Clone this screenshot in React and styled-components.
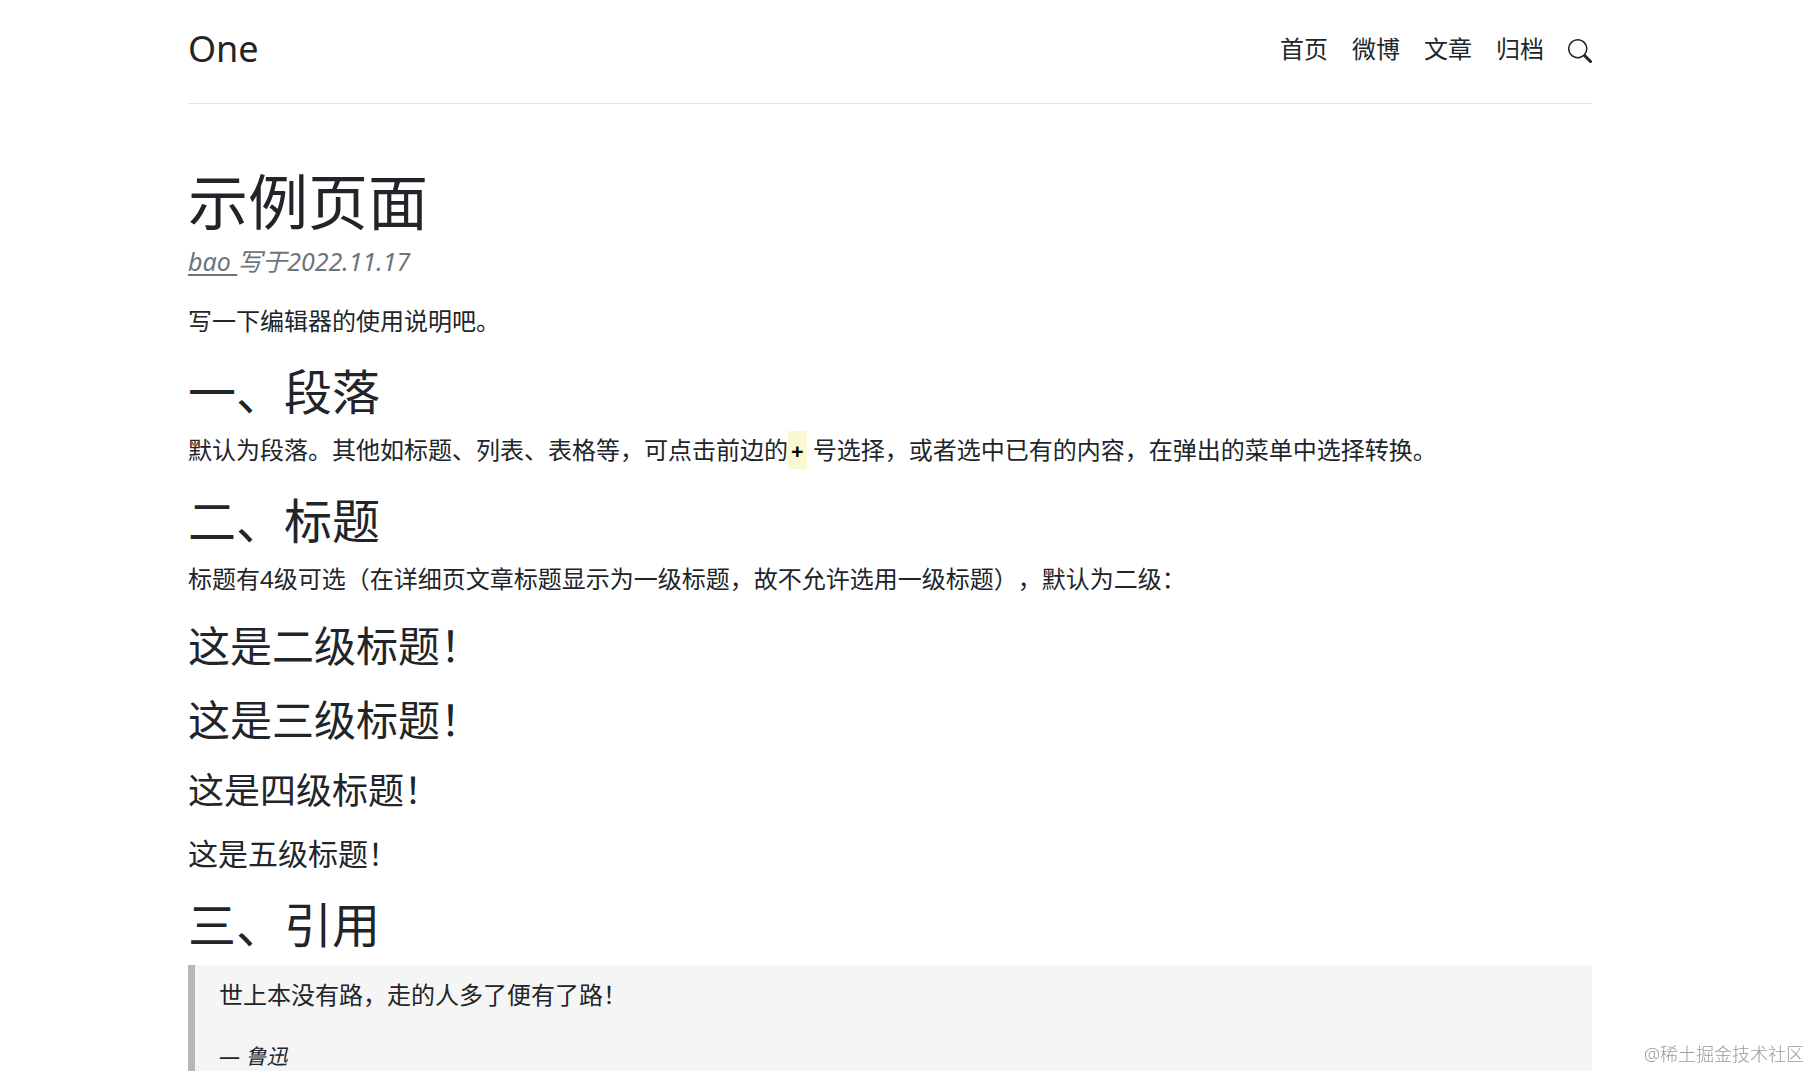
import React from "react";
import styled, { createGlobalStyle, css } from "styled-components";
import { BsSearch } from "react-icons/bs";

const GlobalStyle = createGlobalStyle`
  * {
    box-sizing: border-box;
  }
  body {
    margin: 0;
    background: #fff;
    color: #212529;
    font-family: "Noto Sans", "Noto Sans CJK SC", sans-serif;
    font-size: 24px;
    line-height: 36px;
    text-spacing-trim: space-all;
  }
`;

const navLinks = ["首页", "微博", "文章", "归档"];

const subHeadings = [
  { level: 3, text: "这是二级标题！" },
  { level: 3, text: "这是三级标题！" },
  { level: 4, text: "这是四级标题！" },
  { level: 5, text: "这是五级标题！" }
];

const App = () => {
  return (
    <Page lang="zh-CN">
      <GlobalStyle />
      <Container>
        <Header>
          <Brand href="#">One</Brand>
          <Nav>
            {navLinks.map(name => (
              <NavLink href="#" key={name}>
                {name}
              </NavLink>
            ))}
            <SearchButton type="button" aria-label="搜索">
              <BsSearch />
            </SearchButton>
          </Nav>
        </Header>
        <article>
          <Title>示例页面</Title>
          <Byline>
            <Author href="#">bao </Author>写于2022.11.17
          </Byline>
          <Paragraph>写一下编辑器的使用说明吧。</Paragraph>

          <SectionHeading>一、段落</SectionHeading>
          <Paragraph>
            默认为段落。其他如标题、列表、表格等，可点击前边的<Marker>+</Marker>{" "}
            号选择，或者选中已有的内容，在弹出的菜单中选择转换。
          </Paragraph>

          <SectionHeading>二、标题</SectionHeading>
          <Paragraph>
            标题有4级可选（在详细页文章标题显示为一级标题，故不允许选用一级标题），默认为二级：
          </Paragraph>
          {subHeadings.map(({ level, text }) => (
            <SubHeading as={`h${level}`} $level={level} key={text}>
              {text}
            </SubHeading>
          ))}

          <SectionHeading>三、引用</SectionHeading>
          <Quote>
            <Paragraph>世上本没有路，走的人多了便有了路！</Paragraph>
            <QuoteFooter>
              — <cite>鲁迅</cite>
            </QuoteFooter>
          </Quote>
        </article>
      </Container>
      <Watermark>@稀土掘金技术社区</Watermark>
    </Page>
  );
};

const Page = styled.div`
  height: 100vh;
  overflow-y: auto;
  scrollbar-width: none;
  padding-right: 31px;
`;

const Container = styled.div`
  max-width: 1440px;
  margin: 0 auto;
  padding: 0 18px;
`;

const Header = styled.header`
  display: flex;
  align-items: center;
  justify-content: space-between;
  padding: 24px 0 30px;
  margin-bottom: 62px;
  border-bottom: 1px solid #dee2e6;
`;

const linkReset = css`
  color: inherit;
  text-decoration: none;
`;

const Brand = styled.a`
  ${linkReset}
  font-size: 36px;
  line-height: 49px;
`;

const Nav = styled.nav`
  display: flex;
  align-items: center;
  gap: 24px;
`;

const NavLink = styled.a`
  ${linkReset}
`;

const SearchButton = styled.button`
  display: flex;
  padding: 4px 0 0;
  border: 0;
  background: none;
  color: inherit;
  font-size: 24px;
  cursor: pointer;
`;

const Title = styled.h1`
  margin: 0 0 5px;
  font-size: 60px;
  font-weight: 400;
  line-height: 72px;
`;

const Byline = styled.p`
  margin: 0 0 24px;
  color: #6c757d;
  font-size: 25px;
  font-style: italic;
`;

const Author = styled.a`
  color: inherit;
  text-underline-offset: 3px;
`;

const Paragraph = styled.p`
  margin: 0 0 24px;
`;

const SectionHeading = styled.h2`
  margin: 0 0 11px;
  font-size: 48px;
  font-weight: 400;
  line-height: 58px;
`;

const headingSizes = {
  3: "42px/50px",
  4: "36px/43px",
  5: "30px/36px"
};

const SubHeading = styled.h3`
  margin: 0 0 24px;
  font: 400 ${({ $level }) => headingSizes[$level]} "Noto Sans",
    "Noto Sans CJK SC", sans-serif;
`;

const Marker = styled.mark`
  padding: 4px 3px;
  background: #f9f8d0;
  color: #000;
  font-size: 22px;
  font-weight: 700;
`;

const Quote = styled.blockquote`
  margin: 0 0 24px;
  padding: 12px 24px;
  border-left: 7px solid #b8b8b8;
  background: #f5f5f5;
`;

const QuoteFooter = styled.footer`
  font-size: 21px;
  line-height: 38px;
`;

const Watermark = styled.div`
  position: fixed;
  right: 7px;
  bottom: 3px;
  color: #999;
  font-size: 18px;
  font-weight: 300;
  line-height: 27px;
`;

export default App;
